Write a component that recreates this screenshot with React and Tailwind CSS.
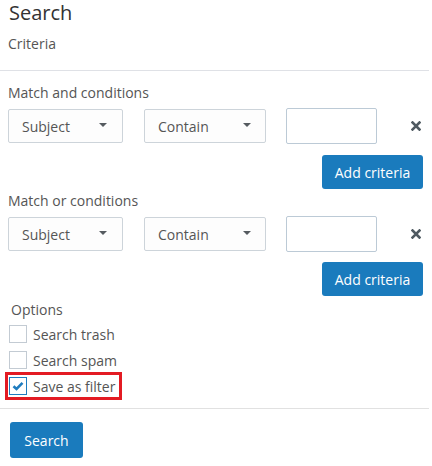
import React from "react";

function Caret() {
  return (
    <svg width="8" height="4" viewBox="0 0 8 4" className="block">
      <path d="M0 0H8L4 4Z" fill="#555b60" />
    </svg>
  );
}

function XIcon() {
  return (
    <svg width="10" height="10" viewBox="0 0 10 10" className="block">
      <path d="M1.5 1.5L8.5 8.5M8.5 1.5L1.5 8.5" stroke="#4f5a61" strokeWidth="2.6" strokeLinecap="square" />
    </svg>
  );
}

function Select({ label, width, caretRight }) {
  return (
    <div
      className={`relative h-[34px] ${width} shrink-0 rounded-[2px] border border-[#cdd4da] bg-[#fdfdfd] flex items-center pl-[13px] text-[14px] text-[#555]`}
    >
      <span>{label}</span>
      <div className={`absolute top-[13px] ${caretRight}`}>
        <Caret />
      </div>
    </div>
  );
}

function CriteriaRow() {
  return (
    <div className="flex items-center pl-[8px]">
      <Select label="Subject" width="w-[115px]" caretRight="right-[15px]" />
      <div className="w-[21px] shrink-0" />
      <Select label="Contain" width="w-[122px]" caretRight="right-[14px]" />
      <div className="w-[20px] shrink-0" />
      <div className="h-[36px] w-[91px] shrink-0 rounded-[2px] border border-[#bccad6] bg-white" />
      <div className="ml-[34px]">
        <XIcon />
      </div>
    </div>
  );
}

function AddButton() {
  return (
    <div className="flex justify-end pr-[6px]">
      <button className="h-[34px] w-[101px] rounded-[3px] bg-[#1a7bbd] text-[14px] text-white">
        Add criteria
      </button>
    </div>
  );
}

function Checkbox({ checked }) {
  return (
    <div
      className={`h-[18px] w-[18px] shrink-0 border bg-white flex items-center justify-center ${
        checked ? "border-[#1f7cbf]" : "border-[#c3cbd3]"
      }`}
    >
      {checked && (
        <svg width="12" height="10" viewBox="0 0 12 10" className="block">
          <path d="M1.5 5.2L4.5 8L10.5 1.8" stroke="#1f7cbf" strokeWidth="2.6" fill="none" />
        </svg>
      )}
    </div>
  );
}

export default function App() {
  return (
    <div
      className="w-[432px] h-[466px] bg-white text-[#555] overflow-hidden"
      style={{ fontFamily: '"Open Sans", "Noto Sans", sans-serif' }}
    >
      <div className="w-[429px]">
        <div className="h-[28px] pl-[9px] text-[20px] leading-[28px] text-[#333] -mt-[1px]">Search</div>
        <div className="mt-[7px] h-[20px] pl-[8px] text-[14px] leading-[20px] text-[#555]">Criteria</div>
        <div className="mt-[16px] h-px bg-[#dfe1e6]" />
        <div className="mt-[12px] h-[20px] pl-[8px] text-[14px] leading-[20px] text-[#555]">Match and conditions</div>
        <div className="mt-[5px]">
          <CriteriaRow />
        </div>
        <div className="mt-[11px]">
          <AddButton />
        </div>
        <div className="mt-[2px] h-[20px] pl-[8px] text-[14px] leading-[20px] text-[#555]">Match or conditions</div>
        <div className="mt-[5px]">
          <CriteriaRow />
        </div>
        <div className="mt-[10px]">
          <AddButton />
        </div>
        <div className="mt-[4px] h-[20px] pl-[11px] text-[14px] leading-[20px] text-[#555]">Options</div>
        <div className="mt-[4px] flex flex-col gap-[6px] pl-[9px]">
          <div className="flex h-[20px] items-center gap-[6px] text-[14px] text-[#555]">
            <Checkbox />
            <span>Search trash</span>
          </div>
          <div className="flex h-[20px] items-center gap-[6px] text-[14px] text-[#555]">
            <Checkbox />
            <span>Search spam</span>
          </div>
          <div className="flex">
            <div className="flex h-[20px] items-center gap-[6px] pr-[3px] text-[14px] text-[#555] outline-[3px] outline-solid outline-offset-[1px] outline-[#e31b23]">
              <Checkbox checked />
              <span>Save as filter</span>
            </div>
          </div>
        </div>
        <div className="mt-[12px] h-px bg-[#e1e1e1]" />
        <div className="mt-[13px] pl-[10px]">
          <button className="h-[36px] w-[73px] rounded-[3px] bg-[#1a7bbd] text-[14px] text-white">Search</button>
        </div>
      </div>
    </div>
  );
}
